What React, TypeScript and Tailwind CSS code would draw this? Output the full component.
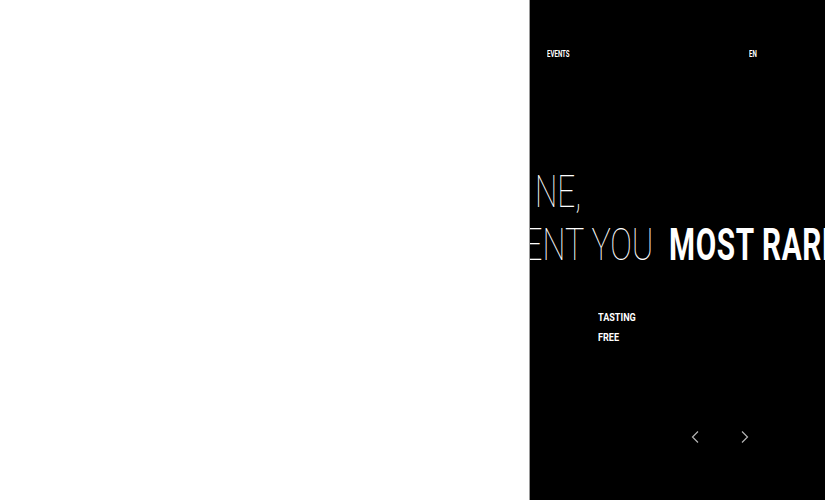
import React from "react";

const font = { fontFamily: "Roboto, 'Liberation Sans', sans-serif" };

function Chevron({ dir }: { dir: "left" | "right" }) {
  return (
    <svg width="8" height="12" viewBox="0 0 8 12" fill="none" className="block">
      <polyline
        points={dir === "left" ? "7,0.5 1.5,6 7,11.5" : "1,0.5 6.5,6 1,11.5"}
        stroke="#b5b5b5"
        strokeWidth="1.2"
      />
    </svg>
  );
}

export default function App() {
  return (
    <div className="flex h-[500px] w-[825px] overflow-hidden bg-white" style={font}>
      <div className="h-full w-[529px] bg-white" />
      <div className="h-full w-px bg-[#9a9a9a]" />

      <section className="relative flex h-full flex-1 flex-col overflow-hidden bg-black text-white">
        {/* top bar */}
        <div className="flex pt-[48px] text-[9px] leading-[12px] font-bold">
          <span className="ml-[17px] inline-block w-[202px] origin-left scale-x-[0.68]">EVENTS</span>
          <span className="inline-block origin-left scale-x-[0.68]">EN</span>
        </div>

        {/* title */}
        <h1 className="mt-[105px] text-[45px] leading-[53px] whitespace-nowrap">
          <span className="ml-[5px] block origin-left scale-x-[0.7] font-thin">NE,</span>
          <span className="-ml-[6px] flex">
            <span className="inline-block w-[145px] shrink-0 origin-left scale-x-[0.72] font-thin">
              ENT YOU
            </span>
            <span className="inline-block origin-left scale-x-[0.66] font-bold tracking-[1px]">
              MOST RARE
            </span>
          </span>
        </h1>

        {/* tags */}
        <ul className="mt-[36px] ml-[68px] text-[11.5px] leading-[20px] font-bold">
          <li className="origin-left scale-x-[0.79]">TASTING</li>
          <li className="origin-left scale-x-[0.79]">FREE</li>
        </ul>

        {/* slider nav */}
        <div className="mt-[84px] ml-[161px] flex gap-[42px]">
          <button className="p-0">
            <Chevron dir="left" />
          </button>
          <button className="p-0">
            <Chevron dir="right" />
          </button>
        </div>
      </section>
    </div>
  );
}
